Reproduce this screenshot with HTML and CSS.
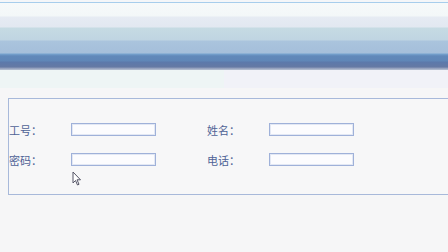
FILE: index.html
```html
<!DOCTYPE html>
<html lang="zh">
<head>
<meta charset="utf-8">
<link rel="stylesheet" href="styles.css">
</head>
<body>
<div class="topline"></div>
<div class="header"></div>
<div class="subbar"><div class="sub-left"></div><div class="sub-right"></div></div>
<div class="panel">
  <div class="form">
    <label class="lbl">工号：</label><input class="field" type="text">
    <label class="lbl lbl2">姓名：</label><input class="field" type="text">
    <label class="lbl">密码：</label><input class="field" type="password">
    <label class="lbl lbl2">电话：</label><input class="field" type="text">
  </div>
  <svg class="cursor" width="11" height="16" viewBox="0 0 11 16"><path d="M1 1 L1 12 L3.5 9.5 L5.5 14 L7 13.3 L5 8.8 L8.5 8.8 Z" fill="#fff" stroke="#555566" stroke-width="1"/></svg>
</div>
</body>
</html>
```
FILE: styles.css
```css
html, body { margin: 0; padding: 0; }
body {
  width: 448px;
  height: 252px;
  overflow: hidden;
  background: #f6f6f7;
  font-family: "Noto Sans CJK SC", "Liberation Sans", sans-serif;
}
.topline {
  height: 2px;
  background: #f4f6f9;
  border-bottom: 1px solid #a7cdec;
}
.header {
  height: 67px;
  background: linear-gradient(to bottom,
    #f6f9fa 0px, #f3f7f8 13px,
    #e6ebf3 14px, #e2e8f1 24px,
    #c6dbe3 25px, #c0d5e2 37px,
    #aac4dd 38px, #a5bfda 50px,
    #76a3cf 51px, #6b95c3 52px,
    #6189ba 53px, #5f86b7 58px,
    #5c79ab 59px, #6479a4 64px,
    #8a98b8 65px, #b9c3d3 67px);
}
.subbar { display: flex; height: 18px; }
.sub-left { width: 224px; background: #eef5f5; }
.sub-right { flex: 1; background: #f1f2f8; }
.panel {
  position: relative;
  margin: 10px 0 0 8px;
  height: 95px;
  border: 1px solid #a8b9da;
  border-right: none;
  background: #f7f7f8;
}
.form {
  display: grid;
  grid-template-columns: 62px 85px 51px 62px 85px;
  grid-auto-rows: 13px;
  row-gap: 17px;
  padding-top: 24px;
  align-items: center;
}
.lbl {
  font-size: 11px;
  line-height: 13px;
  color: #4f6396;
  white-space: nowrap;
  position: relative;
  top: 1px;
}
.lbl2 { grid-column: 4; }
.field {
  box-sizing: border-box;
  width: 85px;
  height: 13px;
  margin: 0;
  padding: 0;
  border: 1px solid #9fb1d9;
  box-shadow: inset 0 0 0 1px #e3e8f4;
  background: #fcfcfe;
}
.cursor {
  position: absolute;
  left: 63px;
  top: 72px;
}
```
